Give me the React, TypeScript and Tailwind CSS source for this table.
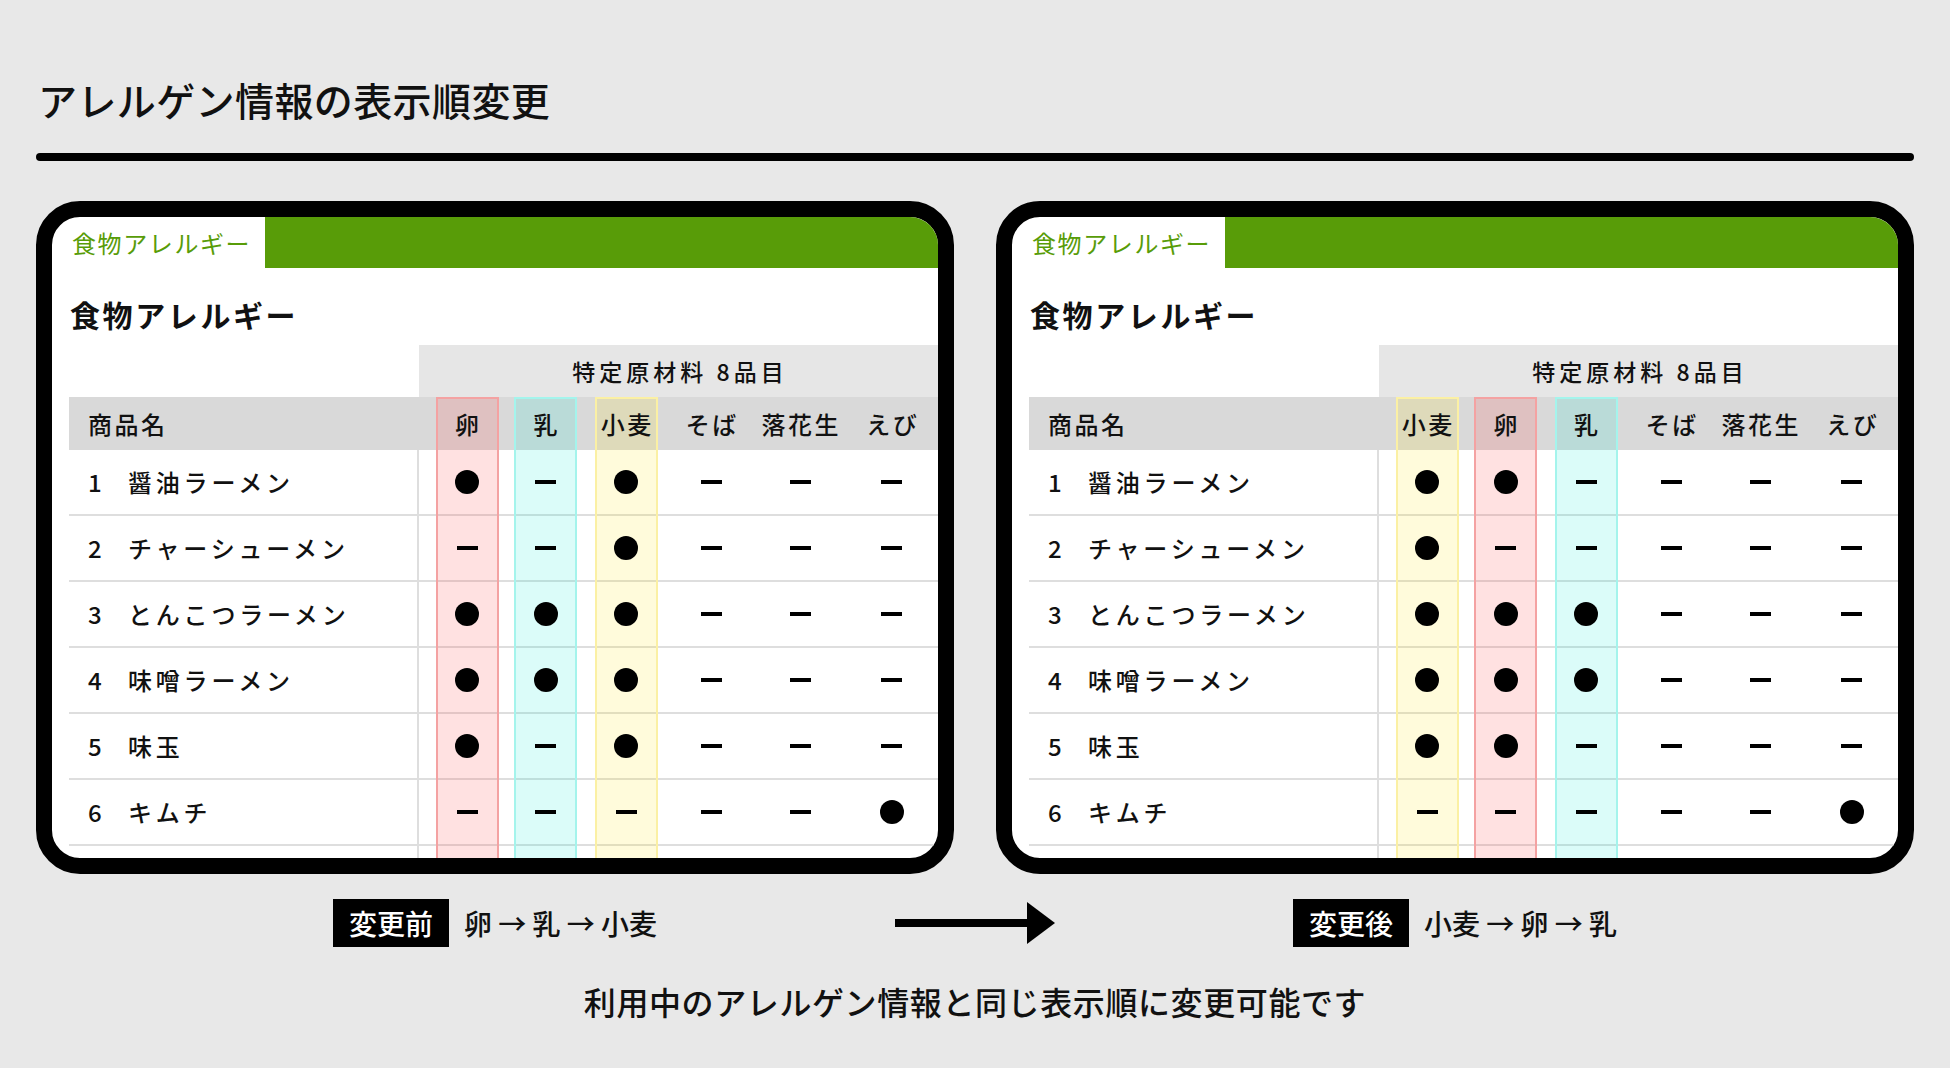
import React from "react";

type Key = "egg" | "milk" | "wheat" | "soba" | "peanut" | "shrimp";

const LABEL: Record<Key, string> = {
  egg: "卵",
  milk: "乳",
  wheat: "小麦",
  soba: "そば",
  peanut: "落花生",
  shrimp: "えび",
};

const HL: Partial<Record<Key, string>> = {
  egg: "border-[#f4a2a2] bg-[rgba(255,80,80,0.17)]",
  milk: "border-[#a4f4ec] bg-[rgba(0,235,215,0.14)]",
  wheat: "border-[#fbf0a4] bg-[rgba(255,230,0,0.14)]",
};

type Item = { name: string } & Record<Key, boolean>;

const ITEMS: Item[] = [
  { name: "醤油ラーメン", egg: true, milk: false, wheat: true, soba: false, peanut: false, shrimp: false },
  { name: "チャーシューメン", egg: false, milk: false, wheat: true, soba: false, peanut: false, shrimp: false },
  { name: "とんこつラーメン", egg: true, milk: true, wheat: true, soba: false, peanut: false, shrimp: false },
  { name: "味噌ラーメン", egg: true, milk: true, wheat: true, soba: false, peanut: false, shrimp: false },
  { name: "味玉", egg: true, milk: false, wheat: true, soba: false, peanut: false, shrimp: false },
  { name: "キムチ", egg: false, milk: false, wheat: false, soba: false, peanut: false, shrimp: true },
];

const GRID = "grid grid-cols-[78px_79px_82px_88px_90px_93px] pl-[9px]";

function Mark({ on }: { on: boolean }) {
  return on ? (
    <div className="relative z-10 h-[24px] w-[24px] rounded-full bg-black" />
  ) : (
    <div className="relative z-10 h-[4px] w-[21px] bg-black" />
  );
}

function Card({ order }: { order: Key[] }) {
  return (
    <div className="h-[673px] overflow-hidden rounded-[44px] border-[16px] border-black bg-white">
      <div className="flex h-[51px]">
        <div className="flex w-[213px] items-center pl-[20px] text-[24px] tracking-[1.6px] text-[#589c08]">
          食物アレルギー
        </div>
        <div className="flex-1 bg-[#589c08]" />
      </div>
      <div className="mt-[31px] pl-[18px] text-[30px] font-bold leading-none tracking-[2.6px]">
        食物アレルギー
      </div>
      <div className="ml-[17px] mt-[16px] font-medium">
        <div className="ml-[350px] flex h-[52px] items-center justify-center bg-[#e6e6e6] pl-[3px] text-[23px] tracking-[4px]">
          特定原材料 8品目
        </div>
        <div className="relative">
          <div className="flex h-[53px] items-center bg-[#d9d9d9] text-[24px] tracking-[2.5px]">
            <div className="w-[350px] pl-[19px]">商品名</div>
            <div className={`${GRID} flex-1`}>
              {order.map((k) => (
                <div key={k} className="flex justify-center">
                  <span className="relative z-10 mr-[-2.5px]">{LABEL[k]}</span>
                </div>
              ))}
            </div>
          </div>
          {[...ITEMS, null].map((it, i) => (
            <div key={i} className="flex h-[66px] border-b-2 border-[#dedede] text-[24px]">
              <div className="flex w-[350px] items-center border-r-2 border-[#dedede] pl-[19px]">
                {it && (
                  <>
                    <span className="w-[40px]">{i + 1}</span>
                    <span className="tracking-[3.8px]">{it.name}</span>
                  </>
                )}
              </div>
              <div className={`${GRID} flex-1 items-center`}>
                {it &&
                  order.map((k) => (
                    <div key={k} className="flex justify-center">
                      <Mark on={it[k]} />
                    </div>
                  ))}
              </div>
            </div>
          ))}
          <div className="pointer-events-none absolute inset-0 flex">
            <div className="w-[350px]" />
            <div className={`${GRID} flex-1`}>
              {order.map((k) => (
                <div key={k} className="flex justify-center">
                  {HL[k] && <div className={`h-full w-[63px] border-2 ${HL[k]}`} />}
                </div>
              ))}
            </div>
          </div>
        </div>
      </div>
    </div>
  );
}

function Group({ label, text }: { label: string; text: string }) {
  return (
    <div className="flex items-center justify-center gap-[15px]">
      <div className="flex h-[48px] items-center bg-black px-[16px] text-[28px] font-medium text-white">{label}</div>
      <div className="text-[28px] font-medium">{text}</div>
    </div>
  );
}

export default function App() {
  return (
    <div className="h-[1068px] w-[1950px] overflow-hidden bg-[#e8e8e8] font-['Noto_Sans_CJK_JP','Noto_Sans',sans-serif] text-[#111]">
      <div className="px-[36px] pt-[80px]">
        <h1 className="pl-[2px] text-[39px] font-medium leading-none tracking-[0.4px]">アレルゲン情報の表示順変更</h1>
        <div className="mt-[34px] h-[8px] rounded-full bg-black" />
        <div className="mt-[40px] grid grid-cols-[918px_918px] gap-[42px]">
          <Card order={["egg", "milk", "wheat", "soba", "peanut", "shrimp"]} />
          <Card order={["wheat", "egg", "milk", "soba", "peanut", "shrimp"]} />
        </div>
        <div className="mt-[25px] grid grid-cols-[918px_42px_918px]">
          <Group label="変更前" text="卵 → 乳 → 小麦" />
          <div className="flex items-center justify-center">
            <svg width="160" height="42" viewBox="0 0 160 42" className="shrink-0">
              <rect x="0" y="17" width="134" height="8" fill="#000" />
              <polygon points="132,0 160,21 132,42" fill="#000" />
            </svg>
          </div>
          <Group label="変更後" text="小麦 → 卵 → 乳" />
        </div>
        <p className="mt-[38px] text-center text-[32px] font-medium leading-none tracking-[0.6px]">
          利用中のアレルゲン情報と同じ表示順に変更可能です
        </p>
      </div>
    </div>
  );
}
